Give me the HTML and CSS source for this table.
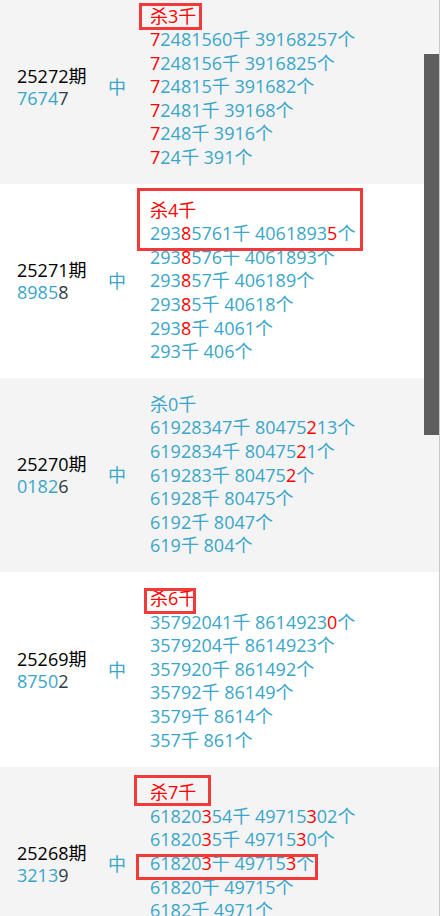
FILE: index.html
```html
<!DOCTYPE html>
<html lang="zh-CN">
<head>
<meta charset="utf-8">
<title>杀千</title>
<link rel="stylesheet" href="styles.css">
</head>
<body>
<div class="page">
  <div class="list">
    <div class="row alt">
      <div class="issue"><div class="no">25272期</div><div class="code">7674<b>7</b></div></div>
      <div class="mid">中</div>
      <div class="lines">
        <div class="mark m1"></div>
        <div class="ln kill">杀3千</div>
        <div class="ln"><i>7</i>2481560千 39168257个</div>
        <div class="ln"><i>7</i>248156千 3916825个</div>
        <div class="ln"><i>7</i>24815千 391682个</div>
        <div class="ln"><i>7</i>2481千 39168个</div>
        <div class="ln"><i>7</i>248千 3916个</div>
        <div class="ln"><i>7</i>24千 391个</div>
      </div>
    </div>
    <div class="row">
      <div class="issue"><div class="no">25271期</div><div class="code">8985<b>8</b></div></div>
      <div class="mid">中</div>
      <div class="lines">
        <div class="mark m2"></div>
        <div class="ln kill">杀4千</div>
        <div class="ln">293<i>8</i>5761千 4061893<i>5</i>个</div>
        <div class="ln">293<i>8</i>576千 4061893个</div>
        <div class="ln">293<i>8</i>57千 406189个</div>
        <div class="ln">293<i>8</i>5千 40618个</div>
        <div class="ln">293<i>8</i>千 4061个</div>
        <div class="ln">293千 406个</div>
      </div>
    </div>
    <div class="row alt">
      <div class="issue"><div class="no">25270期</div><div class="code">0182<b>6</b></div></div>
      <div class="mid">中</div>
      <div class="lines">
        <div class="ln">杀0千</div>
        <div class="ln">61928347千 80475<i>2</i>13个</div>
        <div class="ln">6192834千 80475<i>2</i>1个</div>
        <div class="ln">619283千 80475<i>2</i>个</div>
        <div class="ln">61928千 80475个</div>
        <div class="ln">6192千 8047个</div>
        <div class="ln">619千 804个</div>
      </div>
    </div>
    <div class="row">
      <div class="issue"><div class="no">25269期</div><div class="code">8750<b>2</b></div></div>
      <div class="mid">中</div>
      <div class="lines">
        <div class="mark m4"></div>
        <div class="ln kill">杀6千</div>
        <div class="ln">35792041千 8614923<i>0</i>个</div>
        <div class="ln">3579204千 8614923个</div>
        <div class="ln">357920千 861492个</div>
        <div class="ln">35792千 86149个</div>
        <div class="ln">3579千 8614个</div>
        <div class="ln">357千 861个</div>
      </div>
    </div>
    <div class="row alt">
      <div class="issue"><div class="no">25268期</div><div class="code">3213<b>9</b></div></div>
      <div class="mid">中</div>
      <div class="lines">
        <div class="mark m5a"></div>
        <div class="mark m5b"></div>
        <div class="ln kill">杀7千</div>
        <div class="ln">61820<i>3</i>54千 49715<i>3</i>02个</div>
        <div class="ln">61820<i>3</i>5千 49715<i>3</i>0个</div>
        <div class="ln">61820<i>3</i>千 49715<i>3</i>个</div>
        <div class="ln">61820千 49715个</div>
        <div class="ln">6182千 4971个</div>
        <div class="ln">618千 497个</div>
      </div>
    </div>
  </div>
  <div class="thumb"></div>
</div>
</body>
</html>
```

FILE: styles.css
```css
html, body {
  margin: 0;
  padding: 0;
  background: #ffffff;
}
body {
  font-family: "Open Sans", "Noto Sans CJK SC", sans-serif;
  font-size: 18px;
  overflow: hidden;
  height: 916px;
}
.page {
  position: relative;
  width: 439px;
  height: 916px;
  overflow: hidden;
  border-right: 1px solid #c9c9c9;
}
.list {
  margin-top: -10px;
}
.row {
  display: flex;
  align-items: center;
  padding: 14.5px 0;
  background: #ffffff;
}
.row.alt {
  background: #f4f4f4;
}
.issue {
  width: 91px;
  padding-left: 17px;
  flex: none;
}
.no {
  color: #000000;
  line-height: 22px;
  height: 22px;
}
.code {
  color: #3aa6c9;
  line-height: 22px;
  height: 22px;
}
.code b {
  font-weight: normal;
  color: #2f3b45;
}
.mid {
  width: 42px;
  flex: none;
  color: #3aa6c9;
  line-height: 22px;
}
.lines {
  position: relative;
  color: #3aa6c9;
}
.ln {
  line-height: 23.6px;
  height: 23.6px;
  white-space: nowrap;
}
.ln i {
  font-style: normal;
  color: #ff0000;
}
.ln.kill {
  color: #ff0000;
}
.mark {
  position: absolute;
  border: 3px solid #f23a3a;
  box-sizing: border-box;
}
.m1 { left: -11px; top: -2px; width: 63px; height: 27px; }
.m2 { left: -13px; top: -11px; width: 226px; height: 63px; }
.m4 { left: -6px; top: 1px; width: 52px; height: 26px; }
.m5a { left: -16px; top: -6px; width: 77px; height: 31px; }
.m5b { left: -14px; top: 73px; width: 182px; height: 26px; }
.thumb {
  position: absolute;
  left: 424px;
  top: 54px;
  width: 15px;
  height: 381px;
  background: #5e5e5e;
}
```
